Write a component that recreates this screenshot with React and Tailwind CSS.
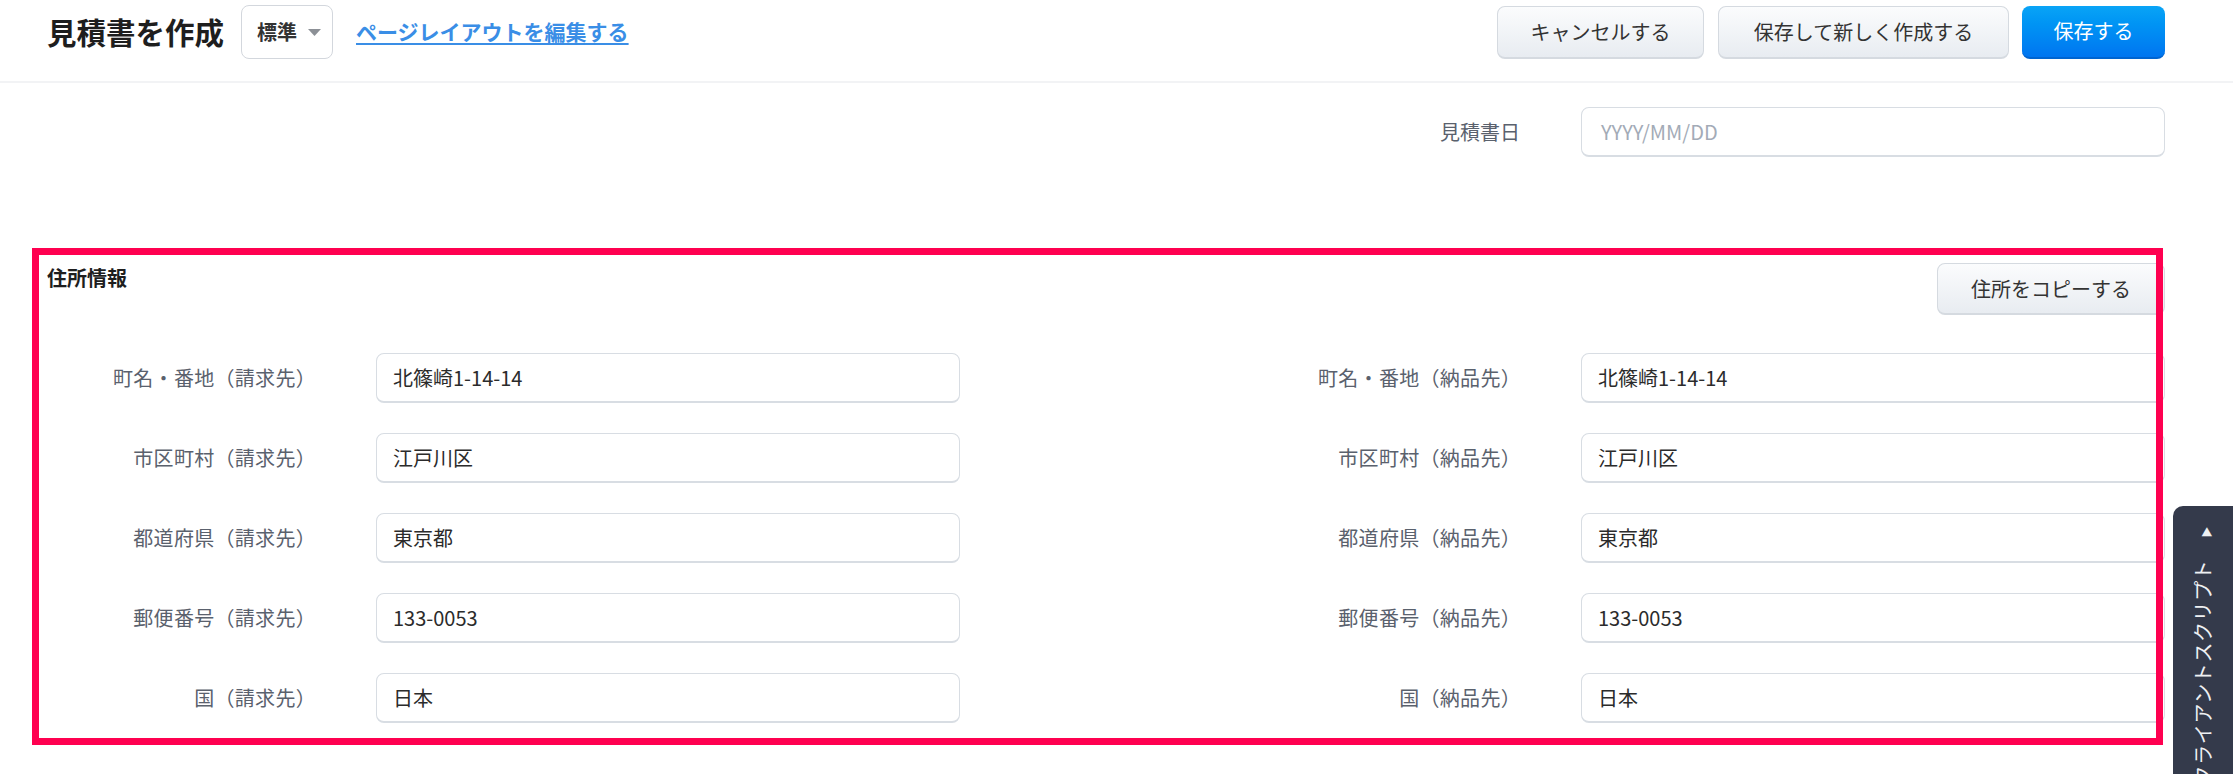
import React from "react";

const rows = [
  ["町名・番地（請求先）", "北篠崎1-14-14", "町名・番地（納品先）", "北篠崎1-14-14"],
  ["市区町村（請求先）", "江戸川区", "市区町村（納品先）", "江戸川区"],
  ["都道府県（請求先）", "東京都", "都道府県（納品先）", "東京都"],
  ["郵便番号（請求先）", "133-0053", "郵便番号（納品先）", "133-0053"],
  ["国（請求先）", "日本", "国（納品先）", "日本"],
];

function Field({ label, value }) {
  return (
    <div className="flex items-center">
      <div className="w-[269px] text-right text-[20px] text-[#5a616d] leading-[28px] tracking-[0.3px]">{label}</div>
      <div className="ml-[60px] w-[584px] h-[50px] rounded-[8px] border border-[#d8dde3] border-b-2 bg-white flex items-center px-[16px] text-[20px] text-[#2b2b2b]">
        {value}
      </div>
    </div>
  );
}

export default function App() {
  return (
    <div
      className="relative w-full h-[774px] overflow-hidden bg-white"
      style={{ fontFamily: '"Noto Sans CJK JP", "Noto Sans", sans-serif' }}
    >
      {/* header */}
      <div className="h-[83px] border-b-2 border-[#f2f3f5] pl-[47px] pr-[68px] pt-[5px]">
        <div className="flex items-center justify-between h-[54px]">
          <div className="flex items-center">
            <h1 className="text-[29.5px] font-bold text-[#1e1e1e] leading-none">見積書を作成</h1>
            <div className="ml-[17px] w-[92px] h-[54px] rounded-[8px] border border-[#d3d7dd] flex items-center pl-[15px] gap-[11px]">
              <span className="text-[20px] font-bold text-[#333]">標準</span>
              <svg width="13" height="7" viewBox="0 0 13 7"><path d="M0 0h13L6.5 7z" fill="#8c9096" /></svg>
            </div>
            <a className="ml-[23px] text-[21px] font-bold text-[#3a8ee6] underline underline-offset-[3px]">ページレイアウトを編集する</a>
          </div>
          <div className="flex items-center">
            <button className="w-[207px] h-[53px] rounded-[8px] border border-[#d5dae0] border-b-2 bg-gradient-to-b from-[#fbfcfd] to-[#e8ecf1] text-[20px] text-[#333]">キャンセルする</button>
            <button className="ml-[14px] w-[291px] h-[53px] rounded-[8px] border border-[#d5dae0] border-b-2 bg-gradient-to-b from-[#fbfcfd] to-[#e8ecf1] text-[20px] text-[#333]">保存して新しく作成する</button>
            <button className="ml-[13px] w-[143px] h-[53px] rounded-[8px] border-b-2 border-[#0064d0] bg-gradient-to-b from-[#0aa4f6] to-[#0075f0] text-[20px] text-white">保存する</button>
          </div>
        </div>
      </div>

      <div className="pl-[47px] pr-[68px]">
        {/* date row */}
        <div className="mt-[24px] flex items-center justify-end">
          <div className="text-[20px] text-[#5a616d]">見積書日</div>
          <div className="ml-[61px] w-[584px] h-[50px] rounded-[8px] border border-[#d8dde3] border-b-2 flex items-center px-[19px] text-[20px] text-[#a3abb7]">
            YYYY/MM/DD
          </div>
        </div>

        {/* address section */}
        <div className="relative mt-[91px] pt-[15px] pb-[22px]">
          <div className="flex items-start justify-between">
            <div className="text-[20px] font-bold text-[#1e1e1e] leading-[30px]">住所情報</div>
            <button className="w-[228px] h-[52px] rounded-[8px] border border-[#d5dae0] border-b-2 bg-gradient-to-b from-[#fbfcfd] to-[#e8ecf1] text-[20px] text-[#333]">住所をコピーする</button>
          </div>
          <div className="mt-[38px] flex flex-col gap-[30px]">
            {rows.map((r) => (
              <div key={r[0]} className="flex items-center justify-between">
                <Field label={r[0]} value={r[1]} />
                <Field label={r[2]} value={r[3]} />
              </div>
            ))}
          </div>
          {/* red annotation frame */}
          <div className="pointer-events-none absolute top-0 bottom-0 left-[-15px] right-[2px] border-[7px] border-[#ff0050]" />
        </div>
      </div>

      {/* client script tab */}
      <div className="absolute left-[2173px] top-[506px] w-[62px] h-[300px] rounded-tl-[10px] bg-[#343a4b] flex justify-center pt-[20px]">
        <div
          className="rotate-180 text-[20px] leading-[24px] tracking-[0.6px] text-[#eef0f3] whitespace-nowrap self-start"
          style={{ writingMode: "vertical-rl", textOrientation: "sideways" }}
        >
          クライアントスクリプト<span className="text-[11px] mt-[22px]">▶</span>
        </div>
      </div>
    </div>
  );
}
